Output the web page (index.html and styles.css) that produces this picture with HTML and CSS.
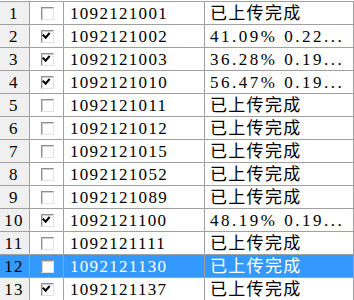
FILE: index.html
```html
<!DOCTYPE html>
<html lang="zh-CN">

<head>
    <meta charset="UTF-8">
    <title>上传列表</title>
    <link rel="stylesheet" href="styles.css">
</head>

<body>
    <div class="grid">
        <div class="row">
            <div class="cell head">1</div>
            <div class="cell check"><span class="box"></span></div>
            <div class="cell id">1092121001</div>
            <div class="cell status">已上传完成</div>
        </div>
        <div class="row">
            <div class="cell head">2</div>
            <div class="cell check"><span class="box checked"></span></div>
            <div class="cell id">1092121002</div>
            <div class="cell status progress">41.09% 0.22...</div>
        </div>
        <div class="row">
            <div class="cell head">3</div>
            <div class="cell check"><span class="box checked"></span></div>
            <div class="cell id">1092121003</div>
            <div class="cell status progress">36.28% 0.19...</div>
        </div>
        <div class="row">
            <div class="cell head">4</div>
            <div class="cell check"><span class="box checked"></span></div>
            <div class="cell id">1092121010</div>
            <div class="cell status progress">56.47% 0.19...</div>
        </div>
        <div class="row">
            <div class="cell head">5</div>
            <div class="cell check"><span class="box"></span></div>
            <div class="cell id">1092121011</div>
            <div class="cell status">已上传完成</div>
        </div>
        <div class="row">
            <div class="cell head">6</div>
            <div class="cell check"><span class="box"></span></div>
            <div class="cell id">1092121012</div>
            <div class="cell status">已上传完成</div>
        </div>
        <div class="row">
            <div class="cell head">7</div>
            <div class="cell check"><span class="box"></span></div>
            <div class="cell id">1092121015</div>
            <div class="cell status">已上传完成</div>
        </div>
        <div class="row">
            <div class="cell head">8</div>
            <div class="cell check"><span class="box"></span></div>
            <div class="cell id">1092121052</div>
            <div class="cell status">已上传完成</div>
        </div>
        <div class="row">
            <div class="cell head">9</div>
            <div class="cell check"><span class="box"></span></div>
            <div class="cell id">1092121089</div>
            <div class="cell status">已上传完成</div>
        </div>
        <div class="row">
            <div class="cell head">10</div>
            <div class="cell check"><span class="box checked"></span></div>
            <div class="cell id">1092121100</div>
            <div class="cell status progress">48.19% 0.19...</div>
        </div>
        <div class="row">
            <div class="cell head">11</div>
            <div class="cell check"><span class="box"></span></div>
            <div class="cell id">1092121111</div>
            <div class="cell status">已上传完成</div>
        </div>
        <div class="row selected">
            <div class="cell head">12</div>
            <div class="cell check"><span class="box"></span></div>
            <div class="cell id">1092121130</div>
            <div class="cell status">已上传完成</div>
        </div>
        <div class="row">
            <div class="cell head">13</div>
            <div class="cell check"><span class="box checked"></span></div>
            <div class="cell id">1092121137</div>
            <div class="cell status">已上传完成</div>
        </div>
    </div>
</body>

</html>
```

FILE: styles.css
```css
body {
    margin: 0;
    padding: 0;
    background-color: #ffffff;
    font-family: "Liberation Serif", "Noto Sans CJK SC", serif;
    font-size: 17px;
    letter-spacing: 1.3px;
    color: #000000;
    overflow: hidden;
}

.grid {
    margin-top: 1px;
    border-top: 1px solid #a0a0a0;
}

.row {
    display: grid;
    grid-template-columns: 30px 34px 141px 1fr;
    height: 23px;
}

.cell {
    box-sizing: border-box;
    border-right: 1px solid #a0a0a0;
    border-bottom: 1px solid #a0a0a0;
    line-height: 22px;
    white-space: nowrap;
    overflow: hidden;
}

.head {
    background-color: #f0f0f0;
    text-align: center;
    padding-left: 1px;
    padding-right: 2px;
    padding-top: 1px;
}

.check {
    display: flex;
    justify-content: center;
    align-items: center;
}

.id {
    padding-left: 6px;
    padding-top: 1px;
}

.status {
    padding-left: 5px;
    padding-top: 1px;
}

/* percent and speed, spaced like the fixed-width grid font */
.status.progress {
    letter-spacing: 2.5px;
}

/* classic sunken checkbox */
.box {
    position: relative;
    width: 13px;
    height: 13px;
    box-sizing: border-box;
    border: 1px solid;
    border-color: #8e8f8f #e3e3e3 #e3e3e3 #8e8f8f;
    background-color: #ffffff;
    box-shadow: inset 1px 1px 0 #d0d0d0;
    margin-left: 1px;
}

.box.checked::after {
    content: "";
    position: absolute;
    left: 2px;
    top: 1px;
    width: 5px;
    height: 3px;
    border-left: 2px solid #000000;
    border-bottom: 2px solid #000000;
    transform: rotate(-48deg);
    transform-origin: 3px 4px;
}

.selected .cell {
    background-color: #3399ff;
}

.selected .id,
.selected .status {
    color: #ffffff;
}
```
